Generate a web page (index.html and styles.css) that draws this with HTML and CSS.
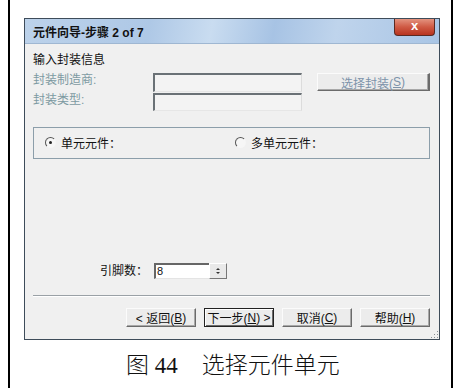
FILE: index.html
```html
<!DOCTYPE html>
<html>
<head>
<meta charset="utf-8">
<link rel="stylesheet" href="styles.css">
</head>
<body>
<div class="page">
  <div class="dialog">
    <div class="titlebar">
      <span class="title">元件向导-步骤 2 of 7</span>
      <span class="close">x</span>
    </div>
    <div class="client">
      <div class="heading">输入封装信息</div>
      <div class="row row1">
        <span class="label dis">封装制造商:</span>
        <span class="field f1"></span>
        <span class="btn btn-sel">选择封装(<u>S</u>)</span>
      </div>
      <div class="row row2">
        <span class="label dis">封装类型:</span>
        <span class="field f2"></span>
      </div>
      <div class="group">
        <span class="radio-item"><span class="radio checked"></span><span>单元元件：</span></span>
        <span class="radio-item"><span class="radio"></span><span>多单元元件：</span></span>
      </div>
      <div class="pins">
        <span class="pin-label">引脚数：</span>
        <span class="spin-input">8</span>
        <span class="spinner"><span class="up"></span><span class="down"></span></span>
      </div>
      <div class="sep"></div>
      <div class="buttons">
        <span class="btn b1">&lt; 返回(<u>B</u>)</span>
        <span class="btn def">下一步(<u>N</u>) &gt;</span>
        <span class="btn">取消(<u>C</u>)</span>
        <span class="btn">帮助(<u>H</u>)</span>
      </div>
      <div class="grip"></div>
    </div>
  </div>
  <div class="caption"><span class="fig">图 44</span><span class="cap">选择元件单元</span></div>
</div>
</body>
</html>
```
FILE: styles.css
```css
html, body {
  margin: 0;
  padding: 0;
  background: #fff;
}
.page {
  margin: 0 8px;
  height: 388px;
  border-left: 2px solid #000;
  border-right: 2px solid #000;
  padding: 18px 0 0 14px;
  box-sizing: border-box;
  font-family: "Liberation Sans", "Noto Sans CJK SC", sans-serif;
  font-size: 12px;
  color: #111;
}
.dialog {
  width: 416px;
  height: 322px;
  box-sizing: border-box;
  border: 1px solid #3e4c5a;
  display: flex;
  flex-direction: column;
  background: #c4d8ee;
}
.titlebar {
  height: 24px;
  flex: none;
  display: flex;
  align-items: flex-start;
  padding-left: 8px;
  background: linear-gradient(100deg, #bcd2ea 0%, #aec8e6 30%, #c9dcf0 45%, #a7c3e4 60%, #bfd4ec 75%, #a9c5e5 100%);
}
.title {
  font-weight: bold;
  font-size: 12px;
  line-height: 14px;
  margin-top: 7px;
  color: #111;
}
.close {
  margin-left: auto;
  margin-right: 4px;
  margin-top: 0;
  width: 41px;
  height: 17px;
  box-sizing: border-box;
  border: 1px solid #5b2a22;
  border-top: none;
  border-radius: 0 0 4px 4px;
  background: linear-gradient(to bottom, #e3937f 0%, #cf5a44 50%, #b8341f 100%);
  color: #fff;
  font-weight: bold;
  font-size: 13px;
  line-height: 14px;
  text-align: center;
}
.client {
  position: relative;
  flex: 1;
  margin: 0 0 0 0;
  background: #f0f0f0;
  border-top: 1px solid #9fb7d2;
  padding: 9px 9px 0 8px;
  display: flex;
  flex-direction: column;
}
.heading {
  line-height: 14px;
  color: #111;
}
.row {
  display: flex;
  align-items: flex-start;
  height: 19px;
}
.row1 { margin-top: 6px; }
.row2 { margin-top: 1px; height: 18px; }
.label {
  width: 120px;
  line-height: 14px;
}
.dis { color: #7d9aa2; }
.field {
  width: 149px;
  box-sizing: border-box;
  border-top: 2px solid #6a7176;
  border-left: 2px solid #6a7176;
  border-right: 1px solid #dcdcdc;
  border-bottom: 1px solid #e6e6e6;
  background: #f3f3f3;
}
.f1 { height: 19px; }
.f2 { height: 18px; }
.btn {
  box-sizing: border-box;
  height: 19px;
  width: 70px;
  display: inline-flex;
  align-items: center;
  justify-content: center;
  background: #ececec;
  border: 1px solid;
  border-color: #fbfbfb #6b6b6b #6b6b6b #fbfbfb;
  box-shadow: inset -1px -1px 0 #a8a8a8;
  color: #111;
  font-size: 12px;
}
.btn-sel {
  margin-left: 15px;
  width: 113px;
  height: 18px;
  color: #7c93aa;
  border-right-width: 2px;
}
.group {
  margin-top: 16px;
  height: 32px;
  box-sizing: border-box;
  border: 1px solid #8c9eaa;
  display: grid;
  grid-template-columns: 190px 1fr;
  align-items: center;
  padding: 0 0 2px 11px;
}
.radio-item {
  display: flex;
  align-items: center;
  gap: 5px;
}
.radio {
  width: 9px;
  height: 9px;
  border-radius: 50%;
  border: 1px solid transparent;
  border-top-color: #555;
  border-left-color: #555;
  position: relative;
  background: #f6f6f6;
}
.radio.checked::after {
  content: "";
  position: absolute;
  left: 3px;
  top: 3px;
  width: 3px;
  height: 3px;
  border-radius: 50%;
  background: #222;
}
.pins {
  margin-top: 104px;
  height: 16px;
  display: flex;
  align-items: center;
  padding-left: 67px;
}
.pin-label {
  width: 54px;
  line-height: 14px;
}
.spin-input {
  width: 55px;
  height: 16px;
  box-sizing: border-box;
  background: #fff;
  border-top: 2px solid #666;
  border-left: 2px solid #666;
  border-bottom: 1px solid #e4e4e4;
  padding-left: 1px;
  line-height: 13px;
  font-size: 11px;
}
.spinner {
  width: 18px;
  height: 16px;
  box-sizing: border-box;
  background: #e9e9e9;
  border: 1px solid;
  border-color: #fff #777 #777 #fff;
  display: flex;
  flex-direction: column;
  align-items: center;
  justify-content: center;
  gap: 2px;
}
.up, .down {
  width: 0;
  height: 0;
  border-left: 2px solid transparent;
  border-right: 2px solid transparent;
}
.up { border-bottom: 2px solid #333; }
.down { border-top: 2px solid #333; }
.sep {
  margin-top: 16px;
  height: 0;
  border-top: 1px solid #9aa1a6;
  border-bottom: 1px solid #fff;
}
.buttons {
  margin-top: 11px;
  display: flex;
  justify-content: flex-end;
  gap: 8px;
}
.b1 { width: 70px; }
.def {
  border: 1px solid #222;
  box-shadow: inset 1px 1px 0 #fff, inset -1px -1px 0 #6b6b6b;
}
.grip {
  position: absolute;
  right: 1px;
  bottom: 1px;
  width: 8px;
  height: 8px;
  background-image: radial-gradient(circle, #8a8f94 0.8px, transparent 1px);
  background-size: 3px 3px;
  clip-path: polygon(100% 0, 100% 100%, 0 100%);
}
.caption {
  margin-top: 13px;
  padding-left: 102px;
  font-size: 23px;
  line-height: 26px;
  color: #111;
  font-family: "Liberation Serif", "Noto Sans CJK SC", serif;
  font-weight: 300;
}
.cap { margin-left: 24px; }
```
